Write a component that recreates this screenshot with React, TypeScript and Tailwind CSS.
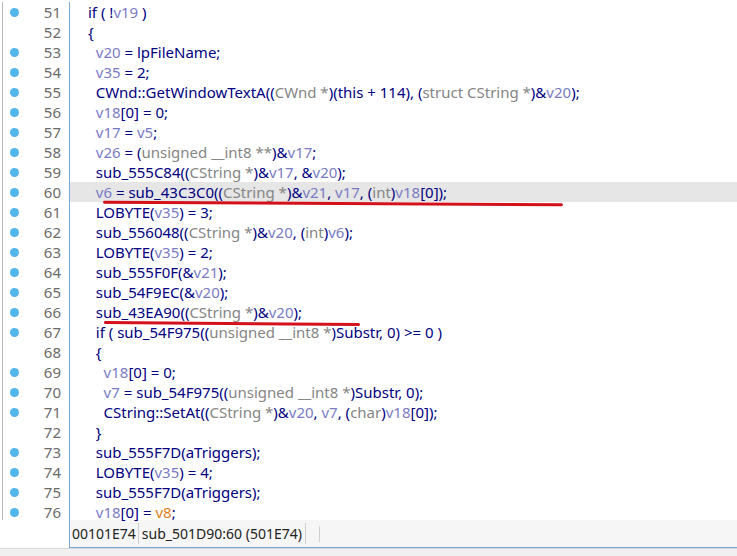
import React from 'react';

type Seg = [string, 'n' | 'v' | 't' | 'g'];

// n = navy text, v = variable, t = type/cast (gray), g = global (orange)
const lines: { no: number; dot: boolean; segs: Seg[] }[] = [
  { no: 51, dot: true, segs: [['if ( !', 'n'], ['v19', 'v'], [' )', 'n']] },
  { no: 52, dot: false, segs: [['{', 'n']] },
  { no: 53, dot: true, segs: [['  ', 'n'], ['v20', 'v'], [' = lpFileName;', 'n']] },
  { no: 54, dot: true, segs: [['  ', 'n'], ['v35', 'v'], [' = 2;', 'n']] },
  { no: 55, dot: true, segs: [['  CWnd::GetWindowTextA((', 'n'], ['CWnd *', 't'], [')(this + 114), (', 'n'], ['struct CString *', 't'], [')&', 'n'], ['v20', 'v'], [');', 'n']] },
  { no: 56, dot: true, segs: [['  ', 'n'], ['v18', 'v'], ['[0] = 0;', 'n']] },
  { no: 57, dot: true, segs: [['  ', 'n'], ['v17', 'v'], [' = ', 'n'], ['v5', 'v'], [';', 'n']] },
  { no: 58, dot: true, segs: [['  ', 'n'], ['v26', 'v'], [' = (', 'n'], ['unsigned __int8 **', 't'], [')&', 'n'], ['v17', 'v'], [';', 'n']] },
  { no: 59, dot: true, segs: [['  sub_555C84((', 'n'], ['CString *', 't'], [')&', 'n'], ['v17', 'v'], [', &', 'n'], ['v20', 'v'], [');', 'n']] },
  { no: 60, dot: true, segs: [['  ', 'n'], ['v6', 'v'], [' = sub_43C3C0((', 'n'], ['CString *', 't'], [')&', 'n'], ['v21', 'v'], [', ', 'n'], ['v17', 'v'], [', (', 'n'], ['int', 't'], [')', 'n'], ['v18', 'v'], ['[0]);', 'n']] },
  { no: 61, dot: true, segs: [['  LOBYTE(', 'n'], ['v35', 'v'], [') = 3;', 'n']] },
  { no: 62, dot: true, segs: [['  sub_556048((', 'n'], ['CString *', 't'], [')&', 'n'], ['v20', 'v'], [', (', 'n'], ['int', 't'], [')', 'n'], ['v6', 'v'], [');', 'n']] },
  { no: 63, dot: true, segs: [['  LOBYTE(', 'n'], ['v35', 'v'], [') = 2;', 'n']] },
  { no: 64, dot: true, segs: [['  sub_555F0F(&', 'n'], ['v21', 'v'], [');', 'n']] },
  { no: 65, dot: true, segs: [['  sub_54F9EC(&', 'n'], ['v20', 'v'], [');', 'n']] },
  { no: 66, dot: true, segs: [['  sub_43EA90((', 'n'], ['CString *', 't'], [')&', 'n'], ['v20', 'v'], [');', 'n']] },
  { no: 67, dot: true, segs: [['  if ( sub_54F975((', 'n'], ['unsigned __int8 *', 't'], [')Substr, 0) >= 0 )', 'n']] },
  { no: 68, dot: false, segs: [['  {', 'n']] },
  { no: 69, dot: true, segs: [['    ', 'n'], ['v18', 'v'], ['[0] = 0;', 'n']] },
  { no: 70, dot: true, segs: [['    ', 'n'], ['v7', 'v'], [' = sub_54F975((', 'n'], ['unsigned __int8 *', 't'], [')Substr, 0);', 'n']] },
  { no: 71, dot: true, segs: [['    CString::SetAt((', 'n'], ['CString *', 't'], [')&', 'n'], ['v20', 'v'], [', ', 'n'], ['v7', 'v'], [', (', 'n'], ['char', 't'], [')', 'n'], ['v18', 'v'], ['[0]);', 'n']] },
  { no: 72, dot: false, segs: [['  }', 'n']] },
  { no: 73, dot: true, segs: [['  sub_555F7D(aTriggers);', 'n']] },
  { no: 74, dot: true, segs: [['  LOBYTE(', 'n'], ['v35', 'v'], [') = 4;', 'n']] },
  { no: 75, dot: true, segs: [['  sub_555F7D(aTriggers);', 'n']] },
  { no: 76, dot: true, segs: [['  ', 'n'], ['v18', 'v'], ['[0] = ', 'n'], ['v8', 'g'], [';', 'n']] },
];

const colorOf = {
  n: 'text-[#000080]',
  v: 'text-[#7b7bc4]',
  t: 'text-[#858585]',
  g: 'text-[#e0801a]',
};

export default function App() {
  return (
    <div className="w-[737px] h-[556px] bg-white overflow-hidden flex flex-col font-['Liberation_Mono'] text-[15px]">
      <div className="relative flex flex-1 min-h-0 pt-[2px]">
        {/* gutter */}
        <div className="w-[67px] shrink-0 border-l border-[#b8b8b8] ml-[2px] flex flex-col">
          {lines.map((l) => (
            <div key={l.no} className="h-[20px] flex items-center">
              <div className="w-[16px] flex justify-end">
                {l.dot && <span className="w-[9px] h-[9px] rounded-full bg-[#52b6ec]" />}
              </div>
              <span className="flex-1 text-right pr-[8px] text-[#6b6b6b] font-['Open_Sans'] text-[15px]">{l.no}</span>
            </div>
          ))}
        </div>
        {/* code */}
        <div className="flex-1 border-l border-[#7aa7d8] flex flex-col whitespace-pre leading-[20px]">
          {lines.map((l) => (
            <div key={l.no} className={`h-[20px] pl-[18px] ${l.no === 60 ? 'bg-[#e6e6e6]' : ''}`}>
              {l.segs.map((s, i) => (
                <span key={i} className={colorOf[s[1]]}>{s[0]}</span>
              ))}
            </div>
          ))}
        </div>
        {/* red marker underlines */}
        <div className="absolute left-[103px] top-[202px] w-[460px] h-[3px] rounded-full bg-[#d4111b] rotate-[0.3deg]" />
        <div className="absolute left-[104px] top-[322px] w-[256px] h-[3px] rounded-full bg-[#d4111b] rotate-[0.4deg]" />
      </div>
      {/* status bar */}
      <div className="flex h-[28px]">
        <div className="w-[67px] ml-[2px] shrink-0" />
        <div className="flex-1 border-l border-b border-[#7aa7d8] flex items-center text-[14px] text-[#222] bg-[#f6f6f6]">
          <span className="px-[2px] border-r border-[#d0d0d0]">00101E74</span>
          <span className="px-[3px] border-r border-[#d0d0d0]">sub_501D90:60 (501E74)</span>
          <span className="w-[14px] border-r border-[#d0d0d0] h-[16px]" />
        </div>
      </div>
      <div className="h-[8px] bg-[#f0f0f0] border-t border-[#d8d8d8]" />
    </div>
  );
}
